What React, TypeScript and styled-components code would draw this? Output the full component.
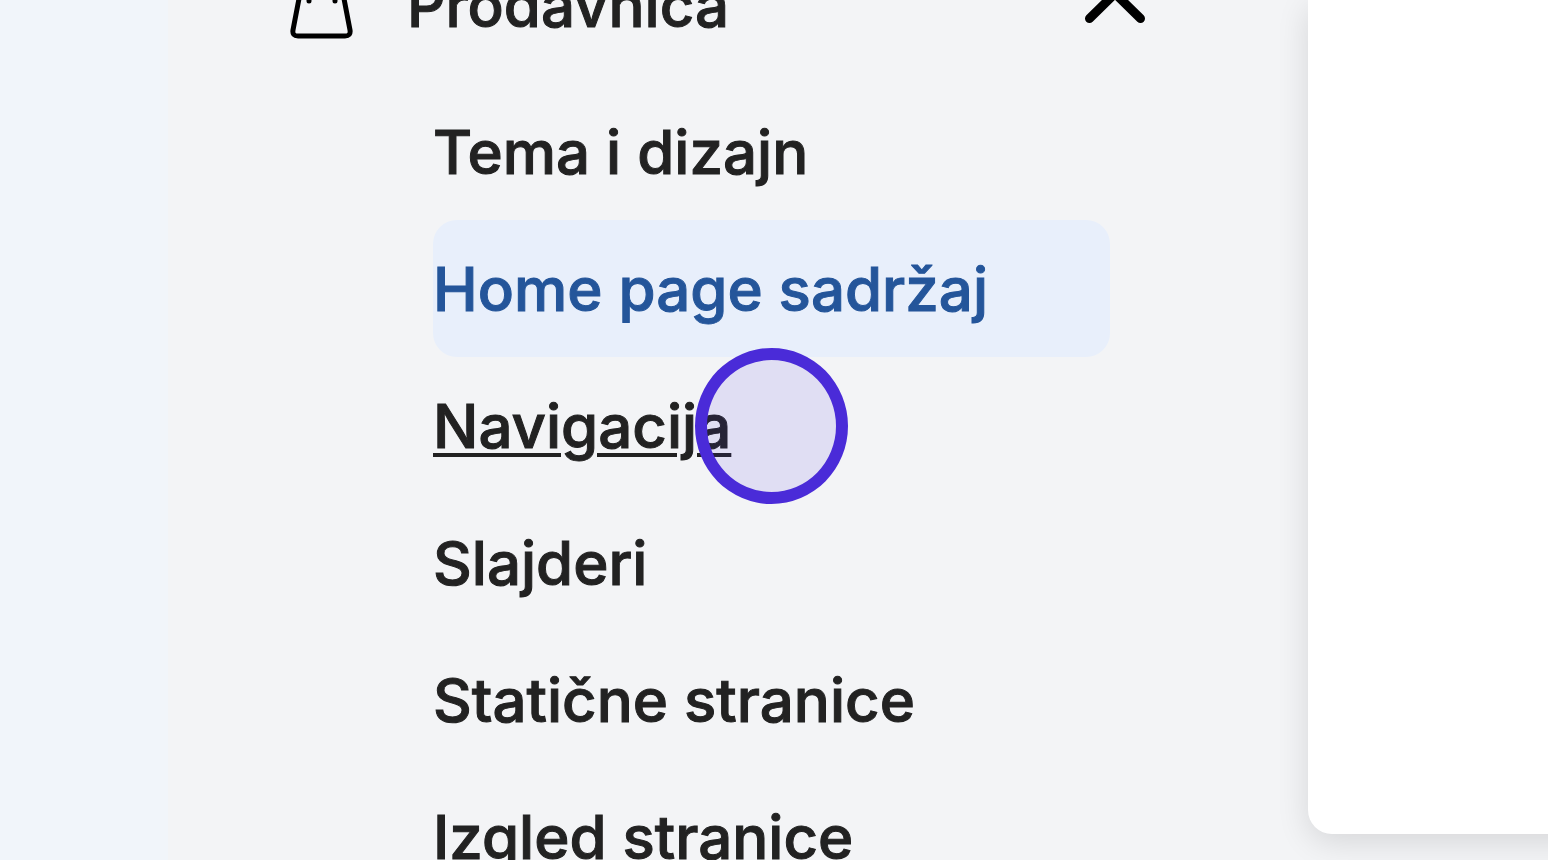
import React from "react";
import styled, { createGlobalStyle, css } from "styled-components";

const GlobalStyle = createGlobalStyle`
  * { box-sizing: border-box; }
  html, body, #root { height: 100%; }
  body { margin: 0; overflow: hidden; background: #f3f4f6; font-family: Inter, "Liberation Sans", sans-serif; color: #222; -webkit-text-stroke: 1px currentColor; }
`;

const Page = styled.div`
  display: flex;
  height: 100%;
  overflow: hidden;
`;

const Gutter = styled.div`
  flex: 0 0 168px;
  background: #f1f5fa;
`;

const Sidebar = styled.nav`
  flex: 0 0 1140px;
  padding: 0 159px 0 121px;
`;

const GroupButton = styled.button`
  display: flex;
  align-items: center;
  width: 100%;
  height: 136px;
  margin-top: -63px;
  padding: 0;
  border: 0;
  background: none;
  color: inherit;
  font: 500 60px/72px Inter, "Liberation Sans", sans-serif;
  text-align: left;
`;

const GroupLabel = styled.span`
  flex: 1;
  margin-left: 52px;
`;

const Items = styled.ul`
  list-style: none;
  margin: 10px 0 0;
  padding: 0 39px 0 144px;
`;

const ItemLink = styled.a<{ $active?: boolean; $hovered?: boolean }>`
  display: flex;
  align-items: center;
  height: 137px;
  border-radius: 24px;
  color: inherit;
  font-size: 60px;
  line-height: 72px;
  font-weight: 500;
  text-decoration: none;
  white-space: nowrap;
  ${(p) => p.$active && css`background: #e8effb; color: #24559a;`}
  ${(p) => p.$hovered && css`text-decoration: underline; text-decoration-thickness: 4px; text-underline-offset: 5px;`}
`;

const Content = styled.main`
  flex: 1;
  height: 834px;
  margin-right: -48px;
  background: #fff;
  border-radius: 0 0 0 24px;
  box-shadow: 0 8px 32px rgba(0, 0, 0, 0.12);
`;

const Pointer = styled.div`
  position: absolute;
  left: 695px;
  top: 348px;
  width: 153px;
  height: 156px;
  border: 12px solid #4a2bd8;
  border-radius: 50%;
  background: rgba(74, 43, 216, 0.11);
  pointer-events: none;
`;

const entries = [
  { label: "Tema i dizajn" },
  { label: "Home page sadržaj", active: true },
  { label: "Navigacija", hovered: true },
  { label: "Slajderi" },
  { label: "Statične stranice" },
  { label: "Izgled stranice" },
];

const BagIcon = () => (
  <svg width="66" height="76" viewBox="0 0 66 76" fill="none" stroke="#000" strokeWidth="5" strokeLinejoin="round" strokeLinecap="round" aria-hidden="true">
    <path d="M13 16H52L61 63Q62 69 56 69H9Q3 69 4 63Z" />
    <path d="M20 34V14a13 13 0 0 1 26 0V34" />
  </svg>
);

const ChevronUp = () => (
  <svg width="66" height="40" viewBox="0 0 66 40" fill="none" stroke="#000" strokeWidth="9" strokeLinecap="round" strokeLinejoin="round" aria-hidden="true">
    <path d="M6.500 33.500L32 8.500L57.500 33.500" />
  </svg>
);

export default function App() {
  return (
    <Page>
      <GlobalStyle />
      <Gutter />
      <Sidebar>
        <GroupButton type="button" aria-expanded="true">
          <BagIcon />
          <GroupLabel>Prodavnica</GroupLabel>
          <ChevronUp />
        </GroupButton>
        <Items>
          {entries.map((e) => (
            <li key={e.label}>
              <ItemLink href="#" $active={e.active} $hovered={e.hovered}>{e.label}</ItemLink>
            </li>
          ))}
        </Items>
      </Sidebar>
      <Content />
      <Pointer />
    </Page>
  );
}
